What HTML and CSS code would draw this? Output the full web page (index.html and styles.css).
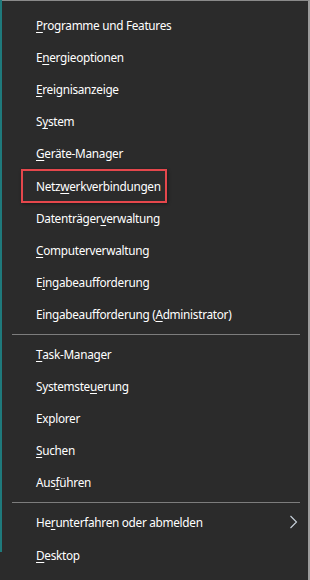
FILE: index.html
```html
<!DOCTYPE html>
<html lang="de">
<head>
    <meta charset="UTF-8">
    <title>Schnellzugriffsmenü</title>
    <link rel="stylesheet" href="styles.css">
</head>
<body>
    <div class="menu">
        <div class="group">
            <div class="item"><u>P</u>rogramme und Features</div>
            <div class="item">E<u>n</u>ergieoptionen</div>
            <div class="item"><u>E</u>reignisanzeige</div>
            <div class="item">S<u>y</u>stem</div>
            <div class="item"><u>G</u>eräte-Manager</div>
            <div class="item marked">Netz<u>w</u>erkverbindungen</div>
            <div class="item">Datenträger<u>v</u>erwaltung</div>
            <div class="item"><u>C</u>omputerverwaltung</div>
            <div class="item">E<u>i</u>ngabeaufforderung</div>
            <div class="item">Eingabeaufforderung (<u>A</u>dministrator)</div>
        </div>
        <div class="separator"></div>
        <div class="group">
            <div class="item"><u>T</u>ask-Manager</div>
            <div class="item">Systemste<u>u</u>erung</div>
            <div class="item">Explorer</div>
            <div class="item"><u>S</u>uchen</div>
            <div class="item">Aus<u>f</u>ühren</div>
        </div>
        <div class="separator"></div>
        <div class="group">
            <div class="item submenu">
                <span>He<u>r</u>unterfahren oder abmelden</span>
                <svg class="chevron" width="9" height="14" viewBox="0 0 9 14">
                    <polyline points="1.5,1 7.5,7 1.5,13" fill="none" stroke="#c9d3dc" stroke-width="1.1"/>
                </svg>
            </div>
            <div class="item"><u>D</u>esktop</div>
        </div>
    </div>
</body>
</html>
```

FILE: styles.css
```css
html, body {
    margin: 0;
    padding: 0;
}

body {
    width: 310px;
    height: 580px;
    overflow: hidden;
    background: linear-gradient(#1f7a7c, #1f7a7c) no-repeat 0 0 / 2px 552px, #2b2b2b;
    font-family: "Noto Sans", "Open Sans", sans-serif;
    color: #ffffff;
}

.menu {
    box-sizing: border-box;
    height: 580px;
    margin-left: 2px;
    padding-top: 8px;
    border-top: 1px solid #8a8a8a;
    border-right: 2px solid #9c9c9c;
    background: #2b2b2b;
}

.item {
    position: relative;
    display: flex;
    align-items: center;
    height: 32.1px;
    padding-left: 34px;
    font-size: 11.8px;
    letter-spacing: -0.3px;
    white-space: nowrap;
}

.item u {
    text-decoration-thickness: 1px;
    text-underline-offset: 2px;
}

.marked::after {
    content: "";
    position: absolute;
    left: 19px;
    top: 0;
    width: 146px;
    height: 34px;
    box-sizing: border-box;
    border: 2px solid #e5474c;
    box-shadow: 1px 1px 3px rgba(0, 0, 0, 0.45);
}

.submenu {
    justify-content: space-between;
    padding-right: 10px;
}

.chevron {
    display: block;
}

.separator {
    height: 1px;
    margin: 4px 8px 3px 10px;
    background: #7d7d7d;
}
```
